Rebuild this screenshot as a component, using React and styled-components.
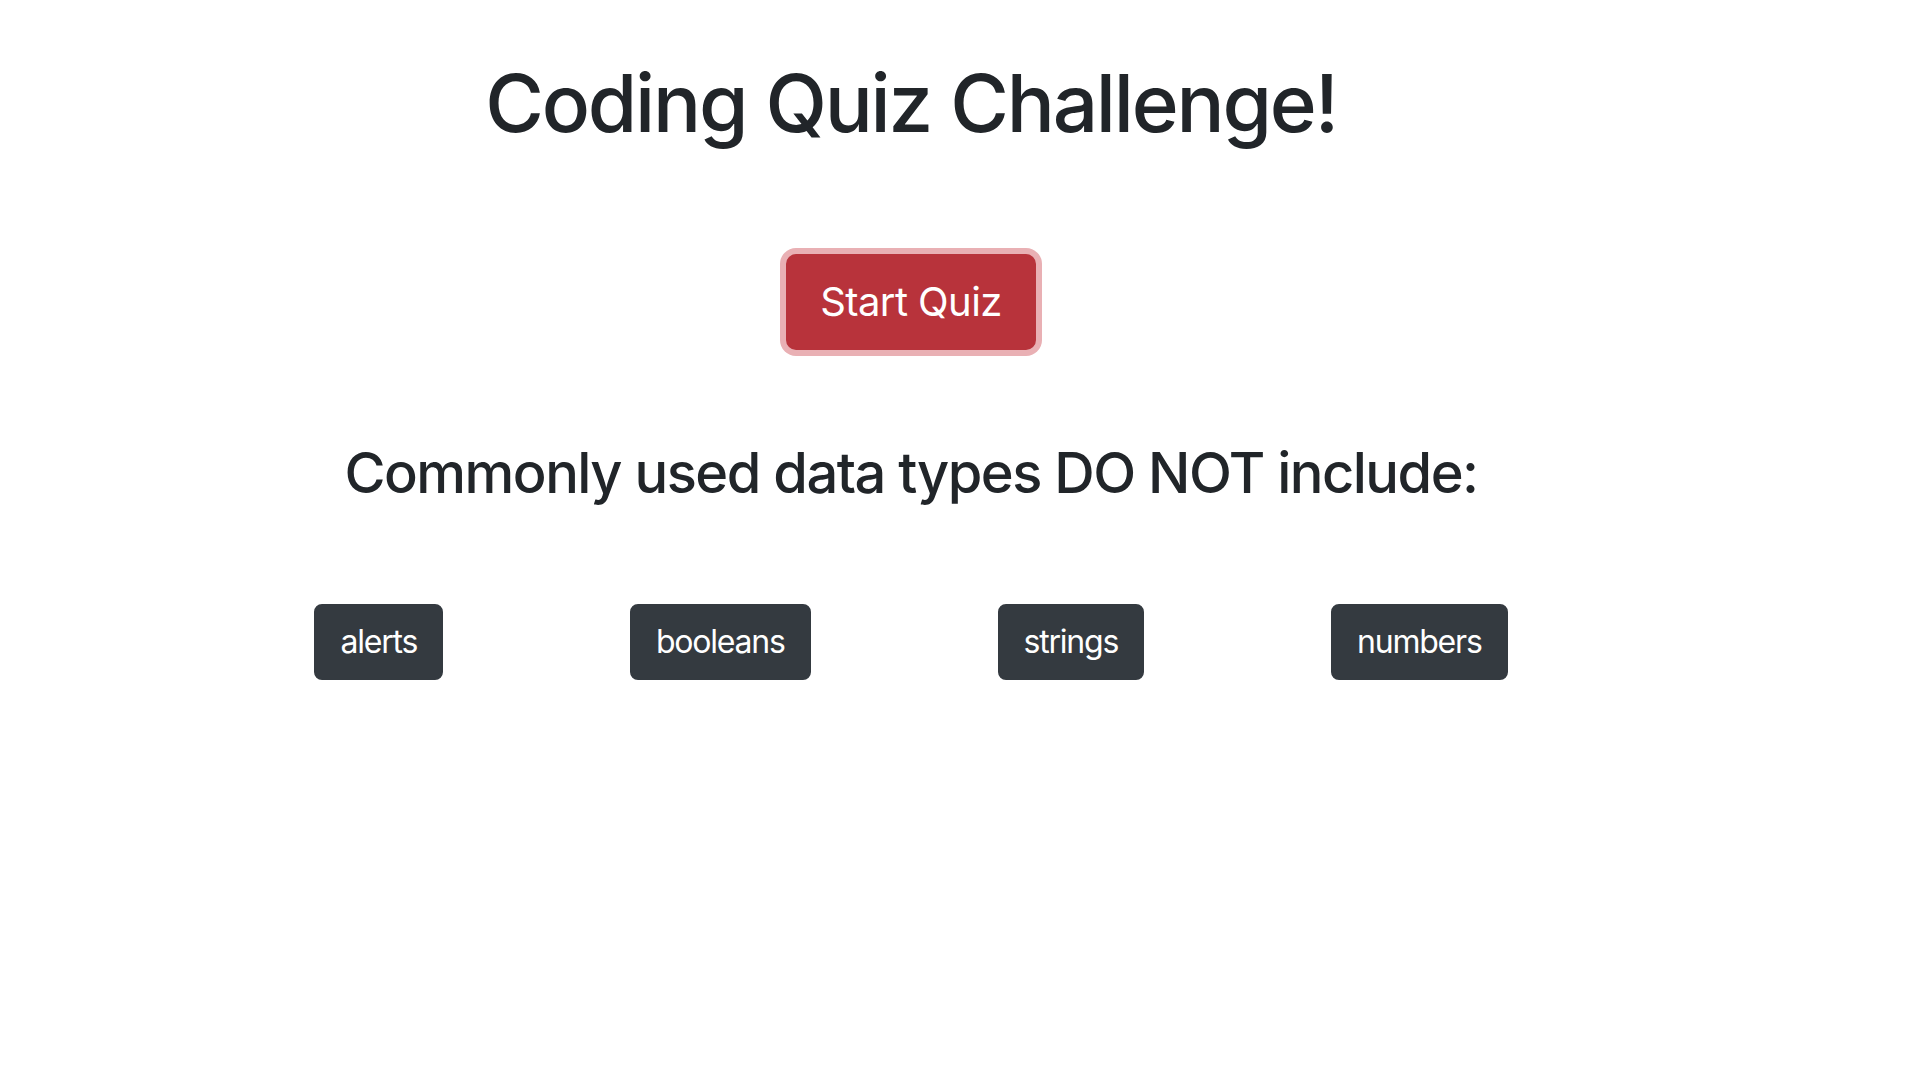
import React from 'react';
import styled, { createGlobalStyle } from 'styled-components';

const GlobalStyle = createGlobalStyle`
  html, body {
    margin: 0;
    padding: 0;
    background: #fff;
  }

  body {
    font-family: Inter, 'Noto Sans', 'Liberation Sans', sans-serif;
    color: #212529;
  }
`;

const choices = ['alerts', 'booleans', 'strings', 'numbers'];

const App = () => {
  return (
    <>
      <GlobalStyle />
      <Page>
        <Container>
          <Title>Coding Quiz Challenge!</Title>
          <StartButton type="button">Start Quiz</StartButton>
          <Question>Commonly used data types DO NOT include:</Question>
          <Choices>
            {choices.map((choice) => (
              <ChoiceButton key={choice} type="button">
                {choice}
              </ChoiceButton>
            ))}
          </Choices>
        </Container>
      </Page>
    </>
  );
};

const Page = styled.div`
  width: 1822px;
  min-height: 1068px;
  padding-top: 55px;
  box-sizing: border-box;
`;

const Container = styled.main`
  max-width: 1440px;
  margin: 0 auto;
  padding: 0 30px;
  box-sizing: border-box;
  display: flex;
  flex-direction: column;
  align-items: center;
`;

const Title = styled.h1`
  margin: 0;
  font-size: 80px;
  font-weight: 500;
  line-height: 1.2;
  letter-spacing: -2.2px;
  text-align: center;
`;

const StartButton = styled.button`
  margin-top: 103px;
  padding: 16px 32px;
  font-family: inherit;
  font-size: 40px;
  font-weight: 400;
  line-height: 1.5;
  letter-spacing: -0.6px;
  color: #fff;
  background-color: #b8333b;
  border: 2px solid #b8333b;
  border-radius: 10px;
  box-shadow: 0 0 0 6px #e9b0b4;
  cursor: pointer;
`;

const Question = styled.h3`
  margin: 90px 0 0;
  font-size: 56px;
  font-weight: 500;
  line-height: 1.2;
  letter-spacing: -1.5px;
  text-align: center;
`;

const Choices = styled.div`
  align-self: stretch;
  margin-top: 97px;
  display: flex;
  justify-content: space-around;
  align-items: center;
`;

const ChoiceButton = styled.button`
  padding: 12px 24px;
  font-family: inherit;
  font-size: 32px;
  font-weight: 400;
  line-height: 1.5;
  letter-spacing: -1.2px;
  color: #fff;
  background-color: #343a40;
  border: 2px solid #343a40;
  border-radius: 8px;
  cursor: pointer;
`;

export default App;
